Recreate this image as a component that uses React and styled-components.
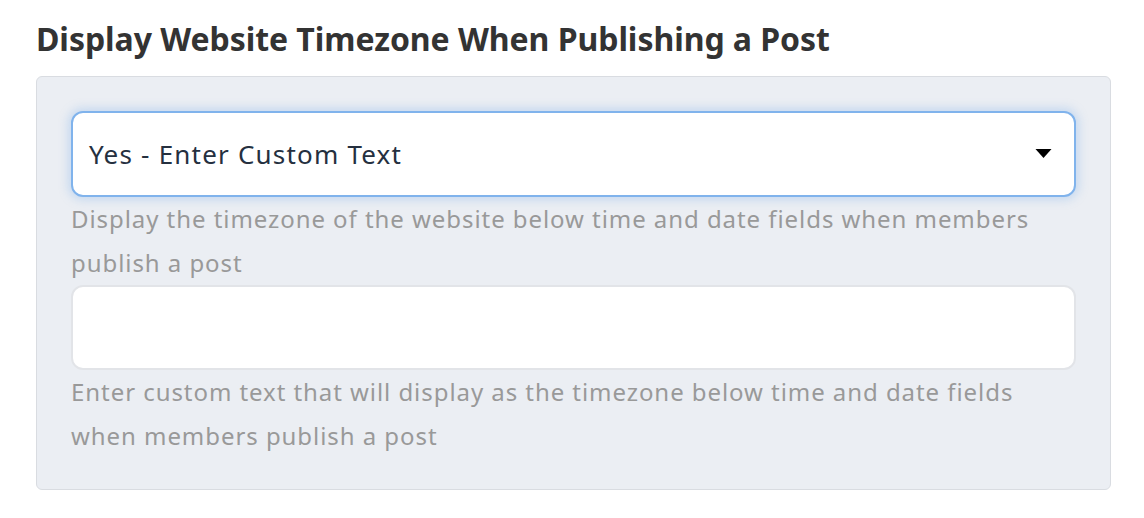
import React from 'react';
import styled, { createGlobalStyle } from 'styled-components';

const GlobalStyle = createGlobalStyle`
  body {
    margin: 0;
    background: #ffffff;
    font-family: 'Noto Sans', 'Open Sans', sans-serif;
  }
`;

function App() {
  return (
    <Page>
      <GlobalStyle />
      <Heading>Display Website Timezone When Publishing a Post</Heading>
      <Panel>
        <SelectBox>
          <span>Yes - Enter Custom Text</span>
          <Caret viewBox='0 0 16 10'>
            <polygon points='0,0 16,0 8,9' fill='#000' />
          </Caret>
        </SelectBox>
        <Help>
          Display the timezone of the website below time and date fields when members publish a post
        </Help>
        <TextInput type='text' />
        <Help>
          Enter custom text that will display as the timezone below time and date fields when members
          publish a post
        </Help>
      </Panel>
    </Page>
  );
}

export default App;

const Page = styled.div`
  padding: 18px 33px 0 36px;
`;

const Heading = styled.h2`
  margin: 0 0 16px;
  font-size: 32px;
  font-weight: 700;
  letter-spacing: -0.05px;
  color: #333333;
  line-height: 42px;
`;

const Panel = styled.div`
  background: #ebeef3;
  border: 1px solid #d9dce1;
  border-radius: 6px;
  padding: 34px 34px 31px;
  display: flex;
  flex-direction: column;
`;

const SelectBox = styled.div`
  height: 86px;
  box-sizing: border-box;
  background: #ffffff;
  border: 2px solid #80b3ec;
  border-radius: 12px;
  box-shadow: 0 0 10px 3px rgba(128, 179, 236, 0.35);
  display: flex;
  align-items: center;
  justify-content: space-between;
  padding: 0 22px 0 16px;
  font-size: 26px;
  letter-spacing: 1.2px;
  color: #25303f;
`;

const Caret = styled.svg`
  width: 17px;
  height: 10px;
`;

const Help = styled.p`
  margin: 0;
  font-size: 24px;
  letter-spacing: 0.94px;
  line-height: 44px;
  color: #999999;
`;

const TextInput = styled.input`
  height: 85px;
  box-sizing: border-box;
  background: #ffffff;
  border: 2px solid #e2e4e8;
  border-radius: 12px;
  outline: none;
  font-size: 26px;
  padding: 0 18px;
`;
